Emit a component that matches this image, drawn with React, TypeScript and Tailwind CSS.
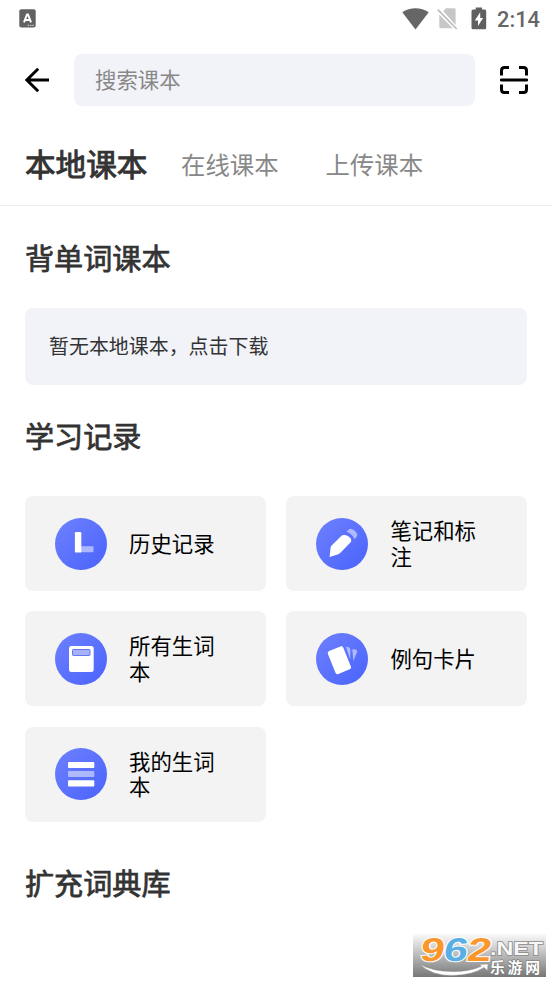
import type { ReactNode } from "react";

const tabs = ["在线课本", "上传课本"];

function StatusBar() {
  return (
    <div className="flex h-[38px] items-center pl-[19px] pr-[12px] text-[#666]">
      <svg width="17" height="19" viewBox="0 0 17 19" className="mt-[-1px]">
        <rect x="0.3" y="0.2" width="16.4" height="18.3" rx="2" fill="#626262" />
        <path d="M5 13.4 8 5.4H9L12 13.4M6 11H11" fill="none" stroke="#fff" strokeWidth="2" />
        <path d="M8.5 16.3H15.3" stroke="#ddd" strokeWidth="1" strokeDasharray="1.6 0.8" />
      </svg>
      <div className="flex-1" />
      <svg width="27" height="22" viewBox="0 0 27 22" className="mr-[8px] mt-[-1px]">
        <path d="M0.3 4.3C8-1.1 19-1.1 26.7 4.3L13.5 21.5Z" fill="#666" />
      </svg>
      <svg width="21" height="23" viewBox="0 0 21 23" className="mr-[13px] mt-[-1px]">
        <path d="M9 1.3H17.3Q18.6 1.3 18.6 2.6V18L6.2 4.2ZM2.3 7.5 15.8 21.2H3.7Q2.3 21.2 2.3 19.8Z" fill="#c7c7c7" />
        <path d="M0.8 2.6 19.7 22" stroke="#bcbcbc" strokeWidth="1.7" />
      </svg>
      <svg width="16" height="23" viewBox="0 0 16 23" className="mr-[10px] mt-[-2px]">
        <path d="M4.7 0.4H11V2.5H13.7Q15.2 2.5 15.2 4V20.7Q15.2 22.2 13.7 22.2H2Q0.5 22.2 0.5 20.7V4Q0.5 2.5 2 2.5H4.7Z" fill="#606060" />
        <path d="M9.2 5.3 3.8 13.5H7V19L12.1 10.9H9.2Z" fill="#fff" />
      </svg>
      <span className="w-[43px] whitespace-nowrap pt-[2px] font-['Roboto',sans-serif] text-[21.8px] font-medium leading-none">2:14</span>
    </div>
  );
}

function Disc({ children }: { children: ReactNode }) {
  return (
    <div className="h-[52px] w-[52px] shrink-0 rounded-full bg-linear-to-br from-[#6e80ff] to-[#4a63fb]">
      <svg width="52" height="52" viewBox="0 0 52 52">{children}</svg>
    </div>
  );
}

const records = [
  {
    label: "历史记录",
    icon: (
      <>
        <rect x="24" y="28.2" width="14.5" height="6" rx="1" fill="#fff" opacity="0.5" />
        <rect x="19.9" y="14" width="6.4" height="20.6" rx="1.2" fill="#fff" />
      </>
    ),
  },
  {
    label: "笔记和标注",
    icon: (
      <>
        <path d="M13.6 39 14.6 29.5Q14.8 28.3 15.6 27.5L25.8 17.6Q27 16.6 29 17.1Q32 17.6 34.6 20.3Q36 22.6 34.9 24.1L24.4 34.8Q23.5 35.7 22.3 36.2Z" fill="#fff" />
        <path d="M30.6 13.5 32.8 11.4Q34 10.4 36.2 11.2Q39.2 12.3 40.8 15.2Q41.7 17.2 40.8 18.4L38.6 21.2Q36.4 16.2 30.6 13.5Z" fill="#fff" opacity="0.5" />
      </>
    ),
  },
  {
    label: "所有生词本",
    icon: (
      <>
        <rect x="14" y="13" width="24.7" height="26" rx="2.5" fill="#fff" />
        <rect x="17.5" y="16.5" width="17.5" height="6" rx="0.7" fill="#a6b2fc" stroke="#6578f2" strokeWidth="1" />
      </>
    ),
  },
  {
    label: "例句卡片",
    icon: (
      <>
        <path d="M30 14Q33.5 13.1 34.4 16.4L34.2 26.5Z" fill="#fff" opacity="0.5" />
        <path d="M36.2 16.6Q40.8 15.4 41.2 18.6L37.4 28Z" fill="#fff" opacity="0.5" />
        <rect x="-8.3" y="-12.3" width="16.6" height="24.6" rx="2.2" transform="translate(23.4 27.2) rotate(-22)" fill="#fff" />
      </>
    ),
  },
  {
    label: "我的生词本",
    icon: (
      <>
        <rect x="13" y="14" width="26.3" height="6" rx="1" fill="#fff" />
        <rect x="13" y="23" width="26.3" height="6" rx="1" fill="#fff" opacity="0.5" />
        <rect x="13" y="32.2" width="26.3" height="6.4" rx="1" fill="#fff" />
      </>
    ),
  },
];

function Heading({ children }: { children: ReactNode }) {
  return (
    <h2 className="h-[44px] text-[29.1px] font-normal leading-[42px] text-[#333] [-webkit-text-stroke:0.75px_#333]">
      {children}
    </h2>
  );
}

function SiteMark() {
  return (
    <svg width="133" height="43" viewBox="0 0 133 43" className="absolute right-[6px] bottom-[6px] overflow-visible">
      <defs>
        <linearGradient id="band" x1="0" y1="0" x2="0" y2="1">
          <stop offset="0" stopColor="#fafafa" />
          <stop offset="0.5" stopColor="#b9b9b9" />
          <stop offset="1" stopColor="#777" />
        </linearGradient>
      </defs>
      <rect width="133" height="43" fill="url(#band)" />
      <g transform="translate(7 26.5) skewX(-9)" fontFamily="Liberation Sans, sans-serif" fontWeight="700" fontSize="33" stroke="#fff" strokeWidth="2" paintOrder="stroke">
        <text x="-1" y="0" textLength="24" lengthAdjust="spacingAndGlyphs" fill="#fa962b">9</text>
        <text x="22.5" y="0" textLength="24" lengthAdjust="spacingAndGlyphs" fill="#58afe5">6</text>
        <text x="46" y="0" textLength="24" lengthAdjust="spacingAndGlyphs" fill="#fa962b">2</text>
      </g>
      <text x="77" y="20.5" textLength="53" lengthAdjust="spacingAndGlyphs" fontFamily="Liberation Sans, sans-serif" fontWeight="700" fontSize="18.5" fill="#f7f7f7" stroke="#8c8c8c" strokeWidth="1.4" paintOrder="stroke">.NET</text>
      <path d="M6 30Q19 42 40 41.5Q60 41 71 33.5L74.5 36.5 75 30 66 30.5 68.5 32.3Q55 38 39 37.5Q20 37.5 6 30Z" fill="#fff" stroke="#8d8d8d" strokeWidth="0.5" />
      <text x="77" y="38.5" textLength="50" fontFamily="Noto Sans CJK SC, sans-serif" fontWeight="700" fontSize="14.8" fill="#fff" stroke="#777" strokeWidth="1.2" paintOrder="stroke">乐游网</text>
    </svg>
  );
}

export default function App() {
  return (
    <div className="relative h-[983px] w-[552px] overflow-hidden bg-white font-['Noto_Sans_CJK_SC',sans-serif]">
      <StatusBar />

      <header className="flex h-[84px] items-center pl-[25px] pr-[24px]">
        <svg width="25" height="26" viewBox="0 0 25 26" fill="none" stroke="#000" strokeWidth="2.9">
          <path d="M24 13H2M13.2 1.8 1.9 13 13.2 24.2" />
        </svg>
        <div className="ml-[24px] flex h-[52px] w-[401px] items-center rounded-[8px] bg-[#f2f3f9] pb-[2px] pl-[21px] text-[21.4px] text-[#888]">
          搜索课本
        </div>
        <svg width="28" height="28" viewBox="0 0 28 28" fill="none" stroke="#000" strokeWidth="3" className="ml-auto">
          <path d="M1.5 9.5V4.5Q1.5 1.5 4.5 1.5H9M19 1.5H23.5Q26.5 1.5 26.5 4.5V9.5M1.5 18.5V23.5Q1.5 26.5 4.5 26.5H9M19 26.5H23.5Q26.5 26.5 26.5 23.5V18.5" />
          <path d="M1.3 13.9H26.7" strokeLinecap="round" strokeWidth="3" />
        </svg>
      </header>

      <nav className="flex h-[84px] items-center border-b-[1.5px] border-[#eee] pb-[2px] pl-[25px]">
        <span className="w-[156px] text-[30.6px] font-normal leading-[44px] text-[#333] [-webkit-text-stroke:0.95px_#333]">本地课本</span>
        {tabs.map((tab) => (
          <span key={tab} className="w-[144.5px] pt-[2px] text-[24.4px] leading-[36px] text-[#888]">{tab}</span>
        ))}
      </nav>

      <main className="px-[25px] pt-[30px]">
        <Heading>背单词课本</Heading>
        <div className="mt-[28px] flex h-[76.5px] w-[502px] items-center rounded-[8px] bg-[#f2f3f9] pl-[24px] text-[19.95px] text-[#333]">
          暂无本地课本，点击下载
        </div>
        <div className="mt-[29.5px]">
          <Heading>学习记录</Heading>
        </div>
        <div className="mt-[38px] grid grid-cols-[241px_241px] gap-x-[20.4px] gap-y-[20.3px]">
          {records.map((record) => (
            <div key={record.label} className="flex h-[95px] items-center rounded-[8px] bg-[#f3f3f3] pl-[30px]">
              <Disc>{record.icon}</Disc>
              <span className="ml-[22px] w-[88px] pb-[2px] text-[21.4px] leading-[25.5px] text-black">{record.label}</span>
            </div>
          ))}
        </div>
        <div className="mt-[39px]">
          <Heading>扩充词典库</Heading>
        </div>
      </main>

      <SiteMark />
    </div>
  );
}
